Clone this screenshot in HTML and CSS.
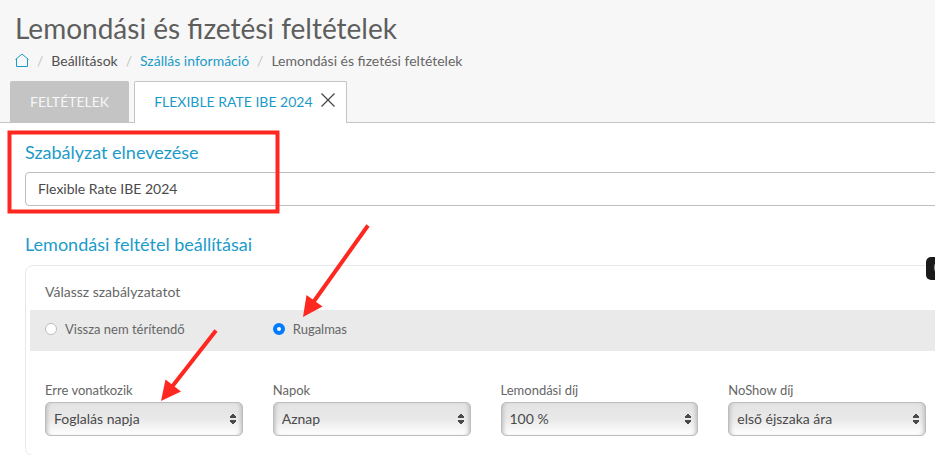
FILE: index.html
```html
<!DOCTYPE html>
<html lang="hu">
<head>
<meta charset="utf-8">
<meta name="viewport" content="width=device-width, initial-scale=1">
<title>Lemondási és fizetési feltételek</title>
<link rel="stylesheet" href="styles.css">
</head>
<body>
<header class="page-header">
  <h1 class="title">Lemondási és fizetési feltételek</h1>
  <nav class="breadcrumb">
    <a class="home" href="#" aria-label="Home"><svg width="14" height="14" viewBox="0 0 14 14"><path d="M0.5 5.500 7 0 13.500 5.500M1.500 4.700V12.500H12.500V4.700" fill="none" stroke="currentColor"/></svg></a>
    <span class="sep">/</span>
    <span class="crumb-dark">Beállítások</span>
    <span class="sep">/</span>
    <a href="#">Szállás információ</a>
    <span class="sep">/</span>
    <span>Lemondási és fizetési feltételek</span>
  </nav>
  <div class="tabs">
    <a class="tab" href="#">FELTÉTELEK</a>
    <div class="tab tab-active">
      <a href="#">FLEXIBLE RATE IBE 2024</a>
      <button class="close" type="button" aria-label="Close"><svg width="14" height="14" viewBox="0 0 14 14"><path d="M0.5 0.5 13.5 13.5M13.5 0.5 0.5 13.5" fill="none" stroke="currentColor" stroke-width="1.2"/></svg></button>
    </div>
  </div>
</header>
<main class="content">
  <label class="section-title" for="policy-name">Szabályzat elnevezése</label>
  <input class="text-input" id="policy-name" type="text" value="Flexible Rate IBE 2024">
  <h2 class="section-title">Lemondási feltétel beállításai</h2>
  <section class="panel">
    <p class="prompt" id="prompt">Válassz szabályzatatot</p>
    <div class="choices" role="radiogroup" aria-labelledby="prompt">
      <label class="choice"><input type="radio" name="policy">Vissza nem térítendő</label>
      <label class="choice"><input type="radio" name="policy" checked>Rugalmas</label>
    </div>
    <div class="fields">
      <div class="field"><label for="applies">Erre vonatkozik</label><select id="applies"><option>Foglalás napja</option></select></div>
      <div class="field"><label for="days">Napok</label><select id="days"><option>Aznap</option></select></div>
      <div class="field"><label for="fee">Lemondási díj</label><select id="fee"><option>100 %</option></select></div>
      <div class="field"><label for="noshow">NoShow díj</label><select id="noshow"><option>első éjszaka ára</option></select></div>
    </div>
  </section>
</main>
<div class="side-badge"><svg width="9" height="23" viewBox="0 0 9 23"><path d="M10 7.5C8.500 7.500 8.500 9 8.500 11S8.500 14 10 14" fill="none" stroke="#8a8a8a" stroke-width="1.300"/></svg></div>
<svg class="annotations" width="400" height="420" viewBox="0 0 400 420" aria-hidden="true">
  <rect x="9.500" y="132.500" width="268" height="79" fill="none" stroke="#ff2820" stroke-width="4"/>
  <path d="M368 225.500 312 304M216 330.500 171 388" fill="none" stroke="#ff2820" stroke-width="4"/>
  <path d="M303 317 306.500 295 322.500 306.500ZM161 401 165.500 379.500 181 391.500Z" fill="#ff2820"/>
</svg>
</body>
</html>
```

FILE: styles.css
```css
* {
  box-sizing: border-box;
}

body {
  margin: 0;
  position: relative;
  overflow: hidden;
  background: #fff;
  color: #666;
  font-family: Lato, "Liberation Sans", sans-serif;
  font-size: 14px;
  line-height: 20px;
}

a {
  color: #1b9bc9;
  text-decoration: none;
}

.page-header {
  background: #f7f7f7;
  border-bottom: 1px solid #c4c4c4;
  padding-top: 8px;
}

.title {
  margin: 0;
  padding: 0 15px;
  color: #5e5e5e;
  font-size: 28px;
  font-weight: 400;
  line-height: 40px;
}

.breadcrumb {
  display: flex;
  align-items: center;
  gap: 8px;
  padding: 3px 15px 0;
}

.home {
  display: flex;
}

.sep {
  color: #c4c4c4;
}

.crumb-dark {
  color: #505050;
}

.tabs {
  display: flex;
  gap: 5px;
  margin-bottom: -1px;
  padding: 10px 10px 0;
}

.tab {
  display: flex;
  align-items: center;
  height: 42px;
  padding: 0 19px 2px;
  border: 1px solid #c4c4c4;
  border-bottom: 0;
  border-radius: 2px 2px 0 0;
  background: #c4c4c4;
  color: #f7f7f7;
}

.tab-active {
  gap: 8px;
  padding-right: 11px;
  background: #fff;
}

.close {
  display: flex;
  padding: 0 0 4px;
  border: 0;
  background: none;
  color: #444;
}

.content {
  margin-right: -30px;
  padding: 17px 0 0 25px;
}

.section-title {
  display: block;
  margin: 0;
  color: #1b9bc9;
  font-size: 18px;
  font-weight: 400;
  line-height: 24px;
}

.text-input {
  display: block;
  width: 100%;
  height: 34px;
  margin: 8px 0 26px;
  padding: 0 12px 2px;
  border: 1px solid #bdbdbd;
  border-radius: 4px;
  background: #fff;
  color: #4a4a4a;
  font: inherit;
}

.panel {
  margin-top: 9px;
  padding: 16px 4px 19px;
  border: 1px solid #e8e8e8;
  border-radius: 8px;
}

.prompt {
  margin: 0 0 8px;
  padding-left: 15px;
}

.choices,
.fields {
  display: grid;
  grid-template-columns: repeat(4, 1fr);
  gap: 30px;
  padding: 0 34px 0 15px;
}

.choices {
  padding-top: 9px;
  padding-bottom: 12px;
  background: #eaeaea;
}

.choice {
  display: flex;
  align-items: center;
  gap: 8px;
  font-size: 13px;
  white-space: nowrap;
}

.choice input {
  appearance: none;
  width: 12px;
  height: 12px;
  margin: 0;
  border: 1px solid #bdbdbd;
  border-radius: 50%;
  background: #fff;
}

.choice input:checked {
  border: 4px solid #007aff;
}

.fields {
  padding-top: 29px;
}

.field label {
  display: block;
  margin-bottom: 2px;
  font-size: 13px;
}

.field select {
  appearance: none;
  display: block;
  width: 100%;
  height: 34px;
  padding: 0 24px 1px 8px;
  border: 1px solid #bdbdbd;
  border-radius: 5px;
  background:
    conic-gradient(from 143deg at 50% 0, #4a4a4a 74deg, transparent 0) right 5px top 10px / 8px 5px no-repeat,
    conic-gradient(from -37deg at 50% 100%, #4a4a4a 74deg, transparent 0) right 5px top 17px / 8px 5px no-repeat,
    linear-gradient(#e3e3e3, #e9e9e9 50%, #fff);
  box-shadow: inset 4px 0 4px -3px #b8b8b8, inset -4px 0 4px -3px #b8b8b8;
  color: #4a4a4a;
  font: inherit;
}

.side-badge {
  position: absolute;
  top: 257px;
  right: 0;
  display: flex;
  overflow: hidden;
  border-radius: 5px 0 0 5px;
  background: #1a1a1a;
}

.annotations {
  position: absolute;
  top: 0;
  left: 0;
  pointer-events: none;
}
```
